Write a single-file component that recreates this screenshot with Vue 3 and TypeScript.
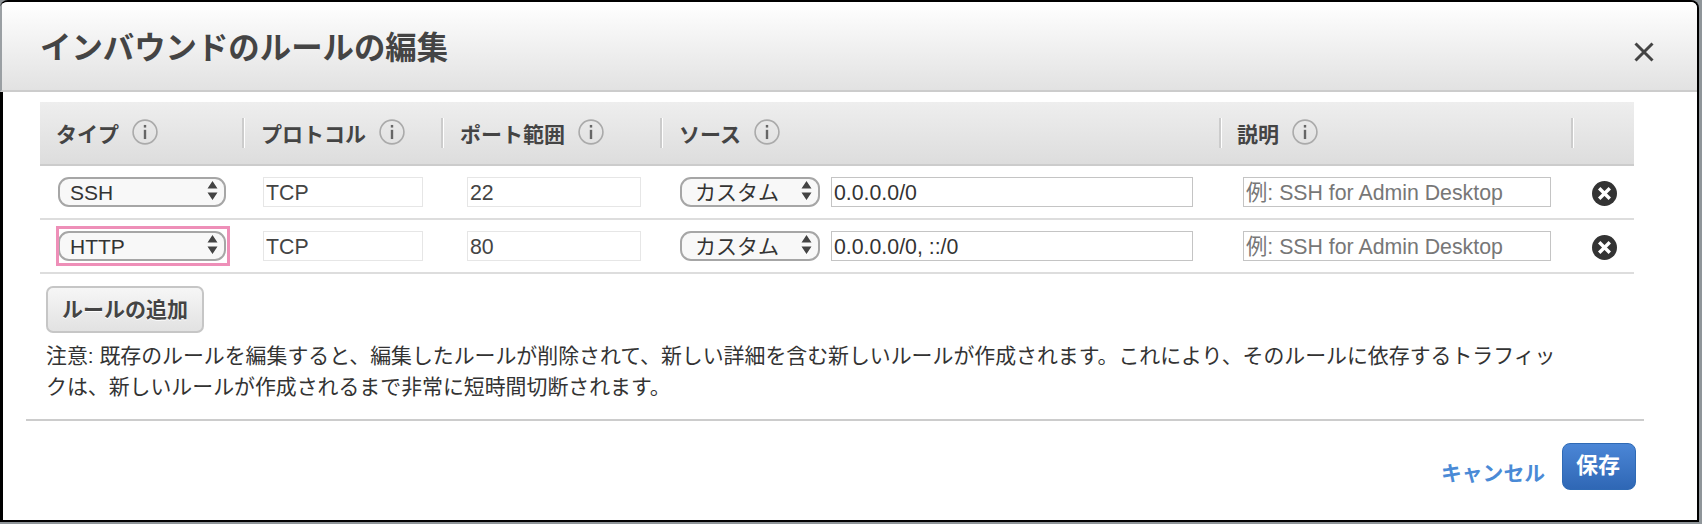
<script setup lang="ts">
interface Rule {
  type: string
  port: string
  source: string
  highlight: boolean
}

const columns: string[] = ['タイプ', 'プロトコル', 'ポート範囲', 'ソース', '説明', '']
const rules: Rule[] = [
  { type: 'SSH', port: '22', source: '0.0.0.0/0', highlight: false },
  { type: 'HTTP', port: '80', source: '0.0.0.0/0, ::/0', highlight: true },
]
</script>

<template>
  <div class="screen">
    <div class="modal">
      <header class="modal-head">
        <h1 class="title">インバウンドのルールの編集</h1>
        <svg class="close" viewBox="0 0 20 20" aria-label="閉じる">
          <path d="M1.5 1.5 18.5 18.5M18.5 1.5 1.5 18.5" />
        </svg>
      </header>

      <div class="modal-main">
        <div class="modal-body">
          <div class="table-row table-head">
            <div v-for="col in columns" :key="col" class="th">
              <span class="th-label">{{ col }}</span>
              <svg v-if="col" class="info" viewBox="0 0 24 24">
                <circle cx="12" cy="12" r="11" />
                <rect x="10.9" y="10" width="2.2" height="8.5" />
                <rect x="10.9" y="5.5" width="2.2" height="2.4" />
              </svg>
            </div>
          </div>

          <div v-for="rule in rules" :key="rule.type" class="table-row rule">
            <div class="td td-type">
              <div class="select-wrap select-type">
                <select class="select">
                  <option>{{ rule.type }}</option>
                </select>
                <svg class="arrows" viewBox="0 0 10 19"><path d="M5 0 10 7.5H0ZM5 19 0 11.5H10Z" /></svg>
                <span v-if="rule.highlight" class="highlight"></span>
              </div>
            </div>
            <div class="td td-proto">
              <input class="input muted proto" value="TCP" disabled />
            </div>
            <div class="td td-port">
              <input class="input muted port" :value="rule.port" disabled />
            </div>
            <div class="td td-source">
              <div class="select-wrap select-source">
                <select class="select">
                  <option>カスタム</option>
                </select>
                <svg class="arrows" viewBox="0 0 10 19"><path d="M5 0 10 7.5H0ZM5 19 0 11.5H10Z" /></svg>
              </div>
              <input class="input source" :value="rule.source" />
            </div>
            <div class="td td-desc">
              <input class="input desc" placeholder="例: SSH for Admin Desktop" />
            </div>
            <div class="td td-remove">
              <svg class="remove" viewBox="0 0 25 25">
                <circle cx="12.5" cy="12.5" r="12.5" />
                <path d="M7.2 7.2 17.8 17.8M17.8 7.2 7.2 17.8" />
              </svg>
            </div>
          </div>

          <button class="add-btn" type="button">ルールの追加</button>
          <p class="note">注意: 既存のルールを編集すると、編集したルールが削除されて、新しい詳細を含む新しいルールが作成されます。これにより、そのルールに依存するトラフィックは、新しいルールが作成されるまで非常に短時間切断されます。</p>
        </div>

        <footer class="modal-foot">
          <a class="cancel">キャンセル</a>
          <button class="save" type="button">保存</button>
        </footer>
      </div>
    </div>
  </div>
</template>

<style scoped>
.screen {
  width: 1702px;
  height: 524px;
  box-sizing: border-box;
  padding: 0 3px 2px 0;
  background: #8f9599;
  font-family: "Liberation Sans", "Noto Sans CJK JP", sans-serif;
  color: #444;
}
.modal {
  height: 100%;
  box-sizing: border-box;
  border: solid #000;
  border-width: 2px 2px 2px 0;
  border-radius: 8px 8px 0 0;
  background: #fff;
  overflow: hidden;
  display: flex;
  flex-direction: column;
}
.modal-head {
  height: 90px;
  flex: none;
  box-sizing: border-box;
  border-left: 2px solid #9a9fa3;
  border-bottom: 2px solid #ccc;
  background: linear-gradient(#fff, #e2e2e2);
  display: flex;
  align-items: flex-start;
  justify-content: space-between;
  padding: 27px 43px 0 38px;
}
.title {
  margin: 0;
  font-size: 31.4px;
  line-height: 40px;
  font-weight: 700;
  color: #444;
}
.close {
  width: 20px;
  height: 20px;
  margin-top: 13px;
  fill: none;
  stroke: #444;
  stroke-width: 3;
}
.modal-main {
  flex: 1;
  border-left: 3px solid #000;
}
.modal-body {
  padding: 10px 0 0 37px;
  width: 1594px;
}
.table-row {
  display: grid;
  grid-template-columns: 204px 199px 219px 559px 352px 61px;
}
.table-head {
  height: 64px;
  box-sizing: border-box;
  border-bottom: 2px solid #ccc;
  background: linear-gradient(#eee, #ddd);
  padding-top: 16px;
}
.th {
  height: 30px;
  box-sizing: border-box;
  display: flex;
  align-items: center;
  gap: 13px;
  padding-left: 16px;
  border-right: 2px solid #ccc;
  box-shadow: 1px 0 0 #fff;
  font-size: 21px;
  font-weight: 700;
  color: #444;
}
.th:nth-child(2),
.th:nth-child(3),
.th:nth-child(4) {
  padding-left: 17px;
}
.th:last-child {
  border-right: 0;
  box-shadow: none;
}
.info {
  width: 26px;
  height: 26px;
  flex: none;
  margin-top: -2px;
}
.info circle {
  fill: none;
  stroke: #aaa;
  stroke-width: 1.5;
}
.info rect {
  fill: #666;
}
.rule {
  height: 54px;
  box-sizing: border-box;
  border-bottom: 2px solid #ddd;
  padding-top: 11px;
}
.td {
  display: flex;
  align-items: flex-start;
  min-width: 0;
}
.td-type { padding-left: 18px; }
.td-proto { padding-left: 19px; }
.td-port { padding-left: 24px; }
.td-source { padding-left: 18px; gap: 11px; }
.td-desc { padding-left: 22px; }
.td-remove { padding-left: 19px; padding-top: 4px; }
.select-wrap {
  position: relative;
  height: 30px;
  flex: none;
}
.select-type { width: 168px; }
.select-source { width: 140px; }
.select {
  appearance: none;
  width: 100%;
  height: 30px;
  box-sizing: border-box;
  margin: 0;
  border: 2px solid #a6a6a6;
  border-radius: 11px;
  background: #f8f8f8;
  padding: 0 0 0 10px;
  font: 21px "Liberation Sans", "Noto Sans CJK JP", sans-serif;
  color: #333;
  outline: none;
}
.select-source .select {
  padding-left: 13px;
}
.arrows {
  position: absolute;
  right: 8px;
  top: 4px;
  width: 11px;
  height: 19px;
  fill: #444;
}
.highlight {
  position: absolute;
  left: -2px;
  right: -4px;
  top: -5px;
  bottom: -5px;
  border: 3px solid #ee8fb8;
  pointer-events: none;
}
.input {
  height: 30px;
  box-sizing: border-box;
  margin: 0;
  border: 1.5px solid #c4c4c4;
  background: #fff;
  padding: 2px 0 0 2px;
  font: 21.3px "Liberation Sans", "Noto Sans CJK JP", sans-serif;
  color: #333;
  outline: none;
  flex: none;
}
.input::placeholder {
  color: #777;
  opacity: 1;
}
.muted {
  border-color: #e6e6e6;
  opacity: 1;
  color: #444;
}
.proto { width: 160px; }
.port { width: 174px; }
.source { width: 362px; }
.desc { width: 308px; }
.remove {
  width: 25px;
  height: 25px;
}
.remove circle {
  fill: #333;
}
.remove path {
  fill: none;
  stroke: #fff;
  stroke-width: 3.4;
}
.add-btn {
  display: block;
  width: 158px;
  height: 47px;
  box-sizing: border-box;
  margin: 12px 0 0 6px;
  padding: 0 0 3px;
  border: 2px solid #c6c6c6;
  border-radius: 7px;
  background: linear-gradient(#f6f6f6, #e2e2e2);
  font: 700 21px "Liberation Sans", "Noto Sans CJK JP", sans-serif;
  color: #444;
  text-shadow: 0 1px 0 #fff;
}
.note {
  width: 1525px;
  margin: 7px 0 0 6px;
  font-size: 20.9px;
  line-height: 31px;
  color: #333;
}
.modal-foot {
  margin: 17px 0 0 23px;
  width: 1618px;
  border-top: 2px solid #ccc;
  box-sizing: border-box;
  padding: 22px 8px 0 0;
  display: flex;
  justify-content: flex-end;
  align-items: flex-start;
  gap: 17px;
}
.cancel {
  margin-top: 16px;
  font-size: 20.8px;
  line-height: 29px;
  font-weight: 700;
  color: #4a8ad6;
}
.save {
  width: 74px;
  height: 47px;
  box-sizing: border-box;
  padding: 0 2px 8px 0;
  border: 1.5px solid #2f6ab5;
  border-radius: 8px;
  background: linear-gradient(#4b86d6, #2f67b5);
  font: 700 22px "Liberation Sans", "Noto Sans CJK JP", sans-serif;
  color: #fff;
}
</style>
